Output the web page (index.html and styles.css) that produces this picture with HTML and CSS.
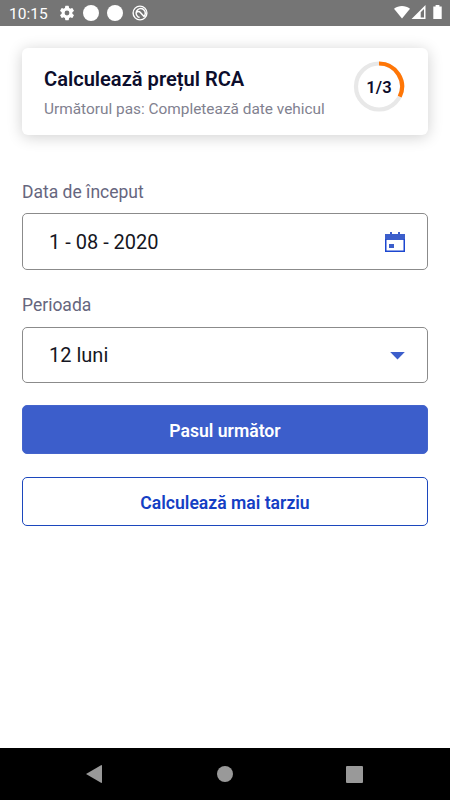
FILE: index.html
```html
<!DOCTYPE html>
<html lang="ro">
<head>
<meta charset="utf-8">
<title>Calculează prețul RCA</title>
<link rel="stylesheet" href="styles.css">
</head>
<body>
<header class="status">
  <span class="clock">10:15</span>
  <svg class="gear" width="16" height="16" viewBox="1.3 1.3 21.4 21.4"><path fill="#fff" fill-rule="evenodd" d="M19.14 12.94c.04-.3.06-.61.06-.94s-.02-.64-.07-.94l2.03-1.58a.49.49 0 0 0 .12-.61l-1.92-3.32a.49.49 0 0 0-.59-.22l-2.39.96a7 7 0 0 0-1.62-.94l-.36-2.54a.48.48 0 0 0-.48-.41h-3.84a.47.47 0 0 0-.47.41l-.36 2.54c-.59.24-1.13.57-1.62.94l-2.39-.96a.47.47 0 0 0-.59.22L2.74 8.87a.47.47 0 0 0 .12.61l2.03 1.58a6 6 0 0 0 0 1.88l-2.03 1.58a.49.49 0 0 0-.12.61l1.92 3.32c.12.22.37.29.59.22l2.39-.96c.5.38 1.03.7 1.62.94l.36 2.54c.05.24.24.41.48.41h3.84c.24 0 .44-.17.47-.41l.36-2.54a7 7 0 0 0 1.62-.94l2.39.96c.22.08.47 0 .59-.22l1.92-3.32a.47.47 0 0 0-.12-.61zM12 15.2a3.2 3.2 0 1 1 0-6.4 3.2 3.2 0 0 1 0 6.4z"/></svg>
  <span class="dot"></span>
  <span class="dot"></span>
  <svg class="ring-icon" width="16" height="16" viewBox="0 0 16 16" fill="none" stroke="#fff"><circle cx="8" cy="8" r="6.9" stroke-width="1.4"/><path stroke-width="1.5" d="M11.5 11.8A4.6 4.6 0 1 0 7.6 12.6M4.6 7.2q2.2-1.6 3.8.3l3.6 4"/></svg>
  <svg class="signals" width="50" height="16" viewBox="0 0 50 16"><path fill="#fff" d="M0 3.7C4.6.1 11.4.1 16 3.7L8 13.5z"/><path fill="#fff" fill-rule="evenodd" d="M31.5 0v14H17.5zM30 4v8.5h-3.3V7.3z"/><path fill="#fff" d="M39.3 1.6h2.3V0h3.8v1.6h2.3V14h-8.4z"/></svg>
</header>
<main>
  <section class="card">
    <div>
      <h1>Calculează prețul RCA</h1>
      <p>Următorul pas: Completează date vehicul</p>
    </div>
    <div class="progress">
      <svg width="52" height="52" viewBox="0 0 52 52" fill="none" stroke-width="4.2"><circle cx="26" cy="25.5" r="23" stroke="#e8e8e8"/><path stroke="#ff7606" d="M26 2.5A23 23 0 0 1 46.7 35.6"/></svg>
      <span>1/3</span>
    </div>
  </section>
  <label class="start">Data de început</label>
  <div class="field date"><span>1 - 08 - 2020</span>
    <svg width="20" height="20" viewBox="0 0 20 20"><path fill="#3c5ecb" d="M0 2h20v6H0zM5 0h2v3H5zM13 0h2v3h-2zM4 12h5v4H4z"/><path fill="none" stroke="#1c47d0" stroke-width="1.5" d="M.75 7v12.25h18.5V7"/></svg>
  </div>
  <label class="period">Perioada</label>
  <div class="field months"><span>12 luni</span>
    <svg width="15" height="9" viewBox="0 0 15 9"><path fill="#3c5ecb" d="M.2 1h14.6L7.5 8.5z"/></svg>
  </div>
  <button class="primary">Pasul următor</button>
  <button class="secondary">Calculează mai tarziu</button>
</main>
<nav>
  <svg width="17" height="18" viewBox="0 0 17 18"><path fill="#999" d="M0 9L15 .2q1-.4 1 .6v16.4q0 1-1 .6z"/></svg>
  <svg width="16" height="16" viewBox="0 0 16 16"><circle cx="8" cy="8" r="8" fill="#999"/></svg>
  <svg width="17" height="17" viewBox="0 0 17 17"><rect width="17" height="17" rx="1" fill="#999"/></svg>
</nav>
</body>
</html>
```

FILE: styles.css
```css
* { box-sizing: border-box; }
body {
  margin: 0;
  width: 450px;
  height: 800px;
  display: flex;
  flex-direction: column;
  overflow: hidden;
  background: #fff;
  font-family: Roboto, sans-serif;
}
svg { display: block; flex: none; }
.status {
  height: 26px;
  background: #757575;
  display: flex;
  align-items: center;
  padding-left: 9px;
  flex: none;
}
.clock { width: 50px; color: #fff; font-size: 15.5px; line-height: 26px; padding-top: 2px; white-space: nowrap; }
.gear { margin-right: 8px; }
.dot { width: 16px; height: 16px; border-radius: 50%; background: #fff; margin-right: 8px; }
.ring-icon { margin-left: .5px; }
.signals { margin: 0 6px 0 auto; }
main { flex: 1; padding: 22px 22px 0; display: flex; flex-direction: column; }
.card {
  height: 87px;
  flex: none;
  border-radius: 6px;
  background: #fff;
  box-shadow: 0 2px 15px rgba(0, 0, 0, .19);
  display: flex;
  justify-content: space-between;
  padding: 13px 23px 0 22px;
}
h1 { margin: 6px 0 0; font-size: 20.1px; line-height: 24px; font-weight: 600; color: #0c0d2c; white-space: nowrap; }
.card p { margin: 7px 0 0; font-size: 15.4px; line-height: 22px; font-weight: 400; color: #81818f; white-space: nowrap; }
.progress { display: grid; width: 52px; height: 52px; place-items: center; }
.progress > * { grid-area: 1 / 1; }
.progress span { font-size: 16.5px; font-weight: 600; color: #0c0d2c; letter-spacing: .2px; padding-top: 1px; }
label { font-size: 17.5px; line-height: 24px; font-weight: 400; color: #66667e; }
.start { margin-top: 45px; }
.period { margin-top: 23px; }
.field {
  height: 57px;
  flex: none;
  border: 1px solid #8b8b8b;
  border-radius: 5px;
  display: flex;
  align-items: center;
  justify-content: space-between;
  padding: 0 22px 0 26px;
  color: #151622;
  font-size: 20px;
  font-weight: 400;
}
.date { margin-top: 9px; }
.months { margin-top: 10px; height: 56px; }
button {
  height: 49px;
  flex: none;
  padding: 2px 0 0;
  border: 1px solid #1c47bd;
  border-radius: 5px;
  font-family: inherit;
  font-size: 17.6px;
  font-weight: 600;
}
.primary { margin-top: 22px; color: #fff; background: #3c5ecb; border-color: #4464cc; }
.secondary { margin-top: 23px; color: #153fc4; background: #fff; }
nav {
  height: 52px;
  flex: none;
  background: #000;
  display: flex;
  align-items: center;
  justify-content: space-between;
  padding: 0 87px 0 86px;
}
```
